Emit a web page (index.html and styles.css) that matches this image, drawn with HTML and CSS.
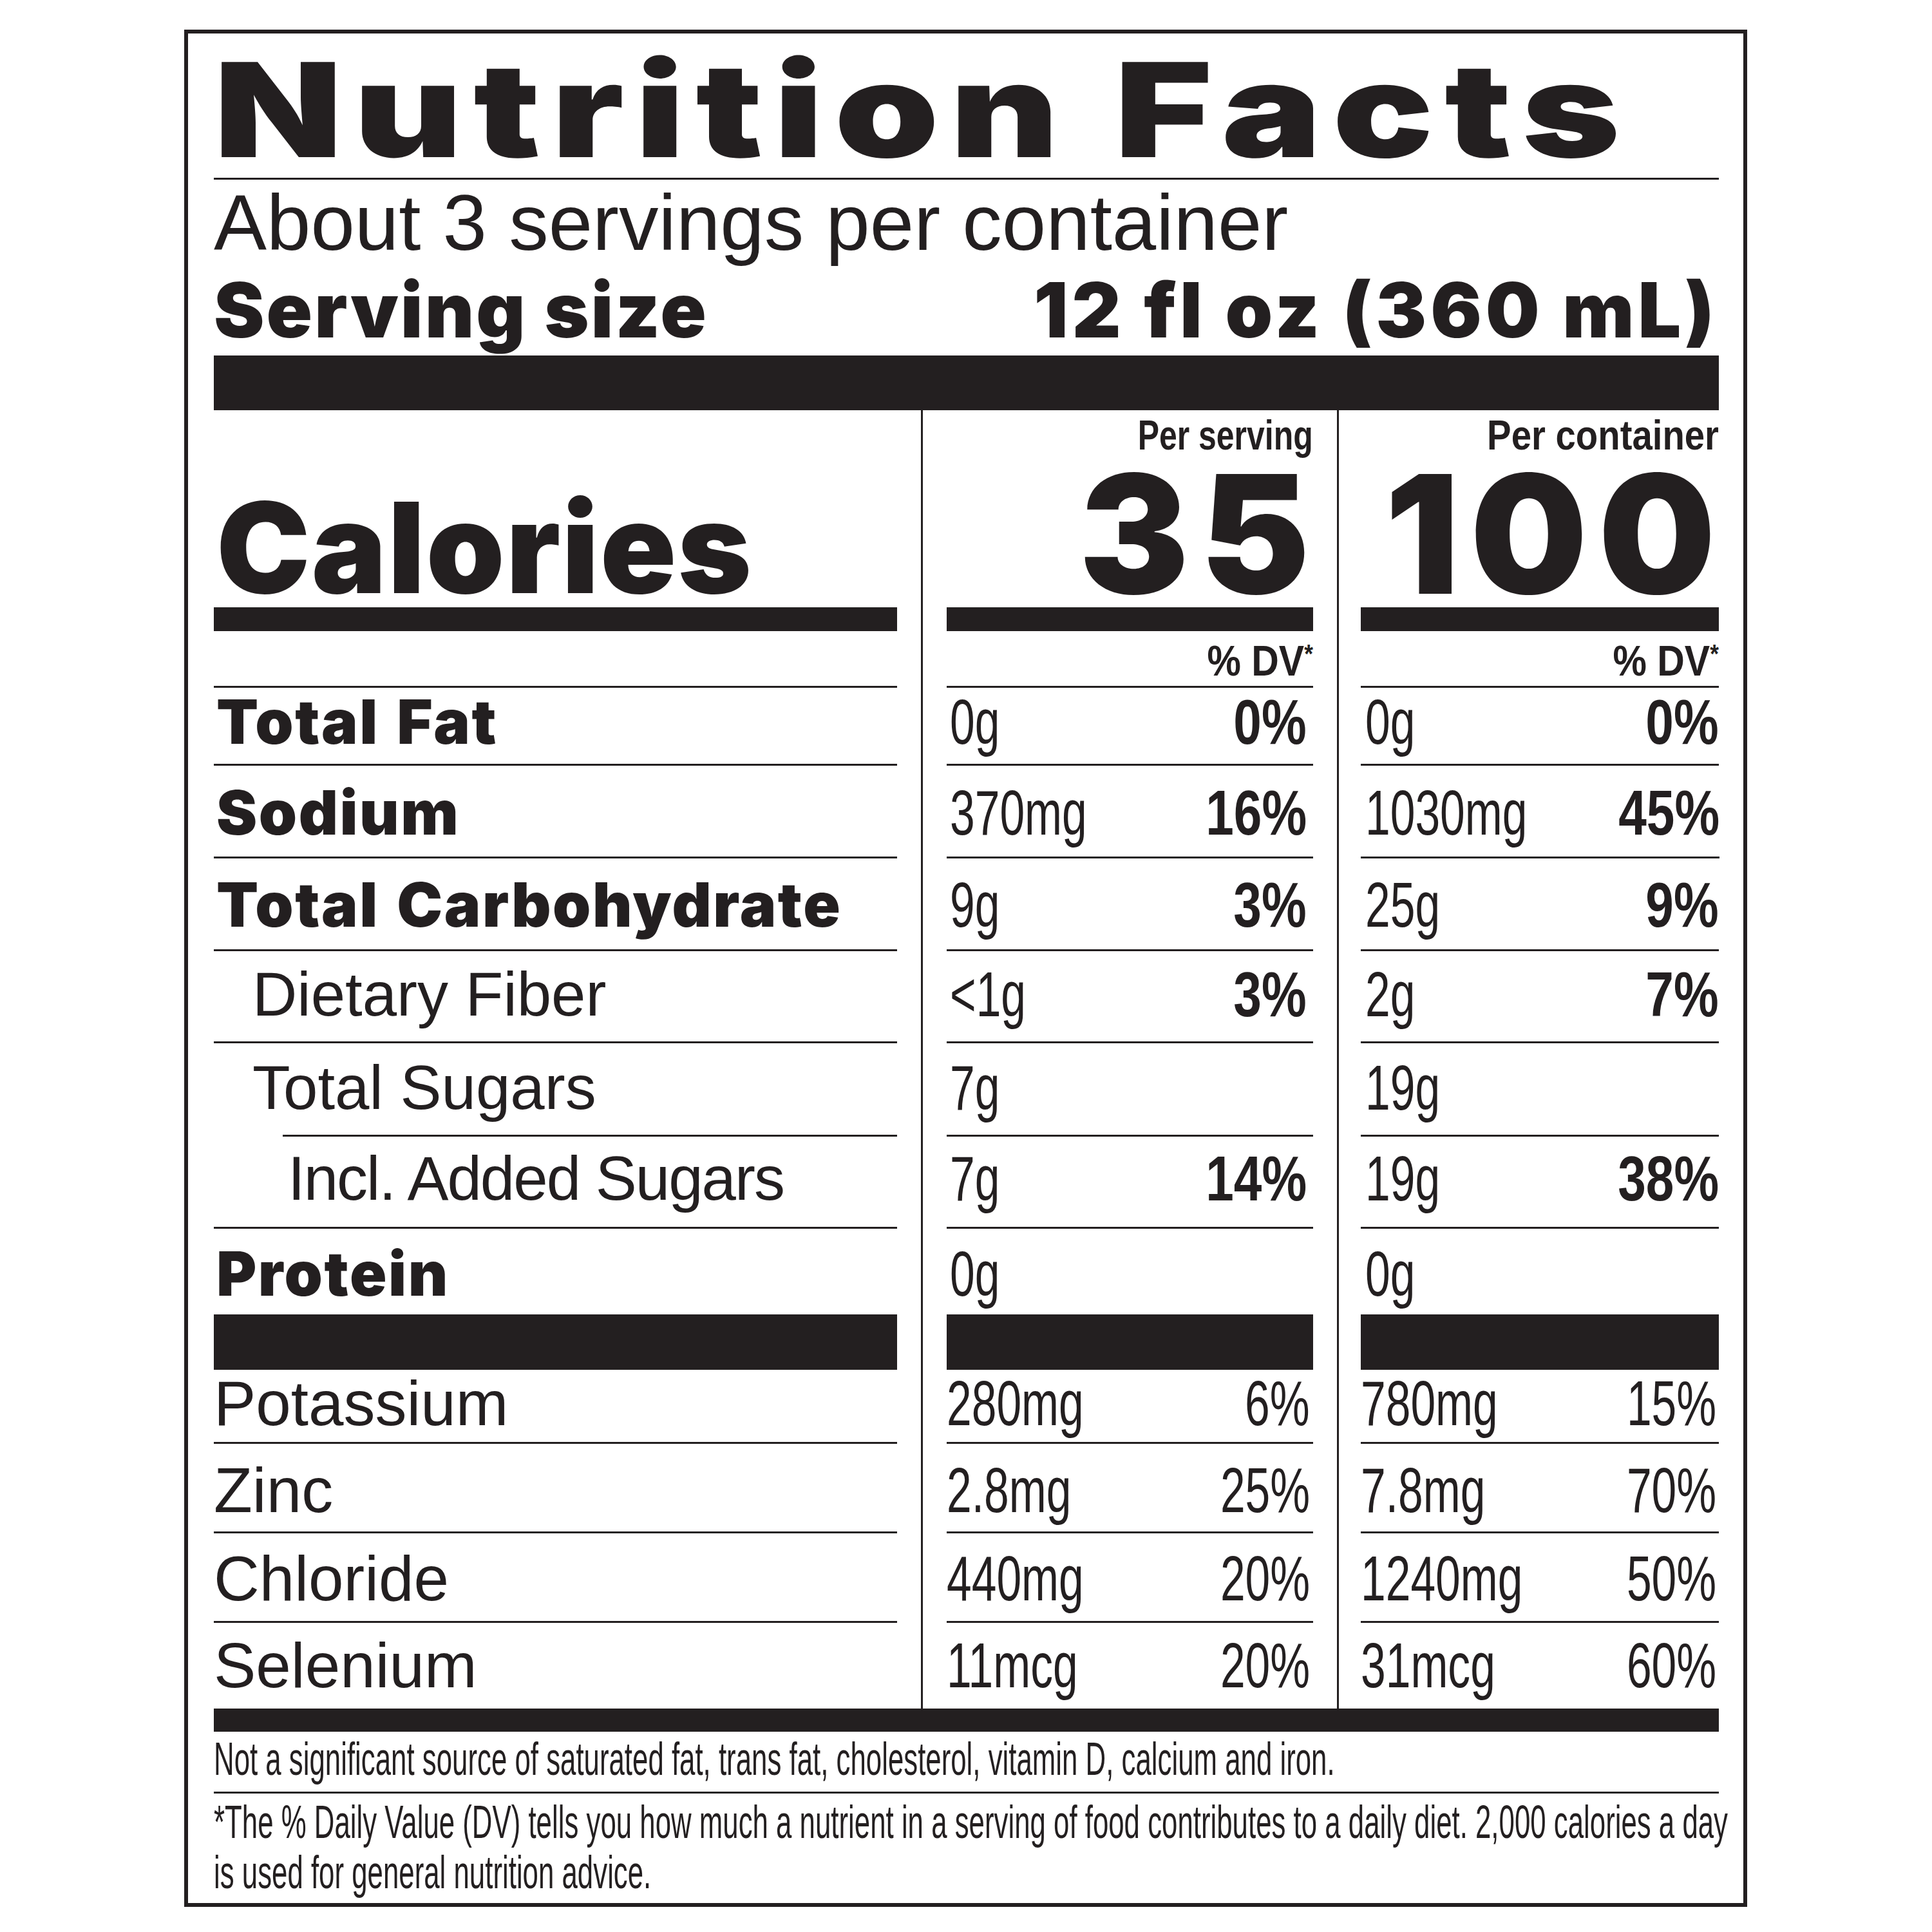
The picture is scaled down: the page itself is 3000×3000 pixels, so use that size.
FILE: index.html
```html
<!DOCTYPE html>
<html lang="en">
<head>
<meta charset="utf-8">
<title>Nutrition Facts</title>
<link rel="stylesheet" href="styles.css">
</head>
<body>
<section class="label">
  <h1 class="title"><span class="title-text">Nutrition Facts</span></h1>
  <p class="servings">About 3 servings per container</p>
  <div class="serving-size"><span class="size-lbl">Serving size</span><span class="amount">12 fl oz (360 mL)</span></div>
  <div class="bar-thick"></div>

  <div class="facts">
    <div class="row r-head">
      <div class="lbl-cell cal">Calories</div>
      <div class="num"><div class="val head"><span class="per">Per serving</span><span class="kcal">35</span></div></div>
      <div class="num c2"><div class="val head"><span class="per wide">Per container</span><span class="kcal">100</span></div></div>
    </div>
    <div class="row r-dv">
      <div class="lbl-cell"></div>
      <div class="num"><div class="val dv"><span class="dvtxt">% DV<span class="ast">*</span></span></div></div>
      <div class="num c2"><div class="val dv"><span class="dvtxt">% DV<span class="ast">*</span></span></div></div>
    </div>
    <div class="row r-fat">
      <div class="lbl-cell b">Total Fat</div>
      <div class="num"><div class="val"><span class="v">0g</span><span class="pb">0%</span></div></div>
      <div class="num c2"><div class="val"><span class="v">0g</span><span class="pb">0%</span></div></div>
    </div>
    <div class="row r-sod">
      <div class="lbl-cell b">Sodium</div>
      <div class="num"><div class="val"><span class="v">370mg</span><span class="pb">16%</span></div></div>
      <div class="num c2"><div class="val"><span class="v">1030mg</span><span class="pb">45%</span></div></div>
    </div>
    <div class="row r-carb">
      <div class="lbl-cell b">Total Carbohydrate</div>
      <div class="num"><div class="val"><span class="v">9g</span><span class="pb">3%</span></div></div>
      <div class="num c2"><div class="val"><span class="v">25g</span><span class="pb">9%</span></div></div>
    </div>
    <div class="row r-fib">
      <div class="lbl-cell ind1">Dietary Fiber</div>
      <div class="num"><div class="val"><span class="v">&lt;1g</span><span class="pb">3%</span></div></div>
      <div class="num c2"><div class="val"><span class="v">2g</span><span class="pb">7%</span></div></div>
    </div>
    <div class="row r-sug">
      <div class="lbl-cell ind1 short-line">Total Sugars</div>
      <div class="num"><div class="val"><span class="v">7g</span></div></div>
      <div class="num c2"><div class="val"><span class="v">19g</span></div></div>
    </div>
    <div class="row r-add">
      <div class="lbl-cell ind2">Incl. Added Sugars</div>
      <div class="num"><div class="val"><span class="v">7g</span><span class="pb">14%</span></div></div>
      <div class="num c2"><div class="val"><span class="v">19g</span><span class="pb">38%</span></div></div>
    </div>
    <div class="row r-pro">
      <div class="lbl-cell b">Protein</div>
      <div class="num"><div class="val"><span class="v">0g</span></div></div>
      <div class="num c2"><div class="val"><span class="v">0g</span></div></div>
    </div>
    <div class="row lo r-pot">
      <div class="lbl-cell">Potassium</div>
      <div class="num"><div class="val"><span class="v">280mg</span><span class="p">6%</span></div></div>
      <div class="num c2"><div class="val"><span class="v">780mg</span><span class="p">15%</span></div></div>
    </div>
    <div class="row lo r-zinc">
      <div class="lbl-cell">Zinc</div>
      <div class="num"><div class="val"><span class="v">2.8mg</span><span class="p">25%</span></div></div>
      <div class="num c2"><div class="val"><span class="v">7.8mg</span><span class="p">70%</span></div></div>
    </div>
    <div class="row lo r-chl">
      <div class="lbl-cell">Chloride</div>
      <div class="num"><div class="val"><span class="v">440mg</span><span class="p">20%</span></div></div>
      <div class="num c2"><div class="val"><span class="v">1240mg</span><span class="p">50%</span></div></div>
    </div>
    <div class="row lo r-sel">
      <div class="lbl-cell">Selenium</div>
      <div class="num"><div class="val"><span class="v">11mcg</span><span class="p">20%</span></div></div>
      <div class="num c2"><div class="val"><span class="v">31mcg</span><span class="p">60%</span></div></div>
    </div>
  </div>

  <div class="bar-med"></div>
  <div class="note-wrap first"><p class="note one">Not a significant source of saturated fat, trans fat, cholesterol, vitamin D, calcium and iron.</p></div>
  <div class="note-wrap"><p class="note two">*The % Daily Value (DV) tells you how much a nutrient in a serving of food contributes to a daily diet. 2,000 calories a day is used for general nutrition advice.</p></div>
</section>
</body>
</html>
```

FILE: styles.css
```css
* {
  box-sizing: border-box;
  margin: 0;
  padding: 0;
}

body {
  background: #ffffff;
  color: #231f20;
  font-family: "Liberation Sans", Arial, sans-serif;
}

.label {
  width: 2427px;
  margin: 46px 0 0 286px;
  border: 6px solid #231f20;
  padding: 14px 38px 9px 40px;
}

.title {
  font-family: Inter, "Liberation Sans", sans-serif;
  font-weight: 900;
  font-size: 203px;
  line-height: 208px;
  white-space: nowrap;
  padding-bottom: 2px;
  border-bottom: 3px solid #231f20;
}

.title-text {
  display: inline-block;
  letter-spacing: 13.5px;
  transform: scaleX(1.28);
  transform-origin: left center;
}

.servings {
  font-size: 123px;
  line-height: 123px;
  margin-top: 5px;
  white-space: nowrap;
}

.serving-size {
  display: flex;
  justify-content: space-between;
  align-items: baseline;
  margin-top: 13px;
  font-family: Inter, "Liberation Sans", sans-serif;
  font-weight: 900;
  font-size: 118px;
  line-height: 123px;
  white-space: nowrap;
}

.serving-size .size-lbl {
  letter-spacing: 3px;
}

.serving-size .amount {
  letter-spacing: 6px;
  padding-right: 1px;
}

.bar-thick {
  height: 85px;
  margin-top: 9px;
  background: #231f20;
}

/* fact rows */
.row {
  display: grid;
  grid-template-columns: 1061px 609px 593px;
  column-gap: 37px;
}

.lbl-cell {
  border-bottom: 3px solid #231f20;
  padding-top: var(--pt, 0);
  font-size: 96px;
  line-height: 100px;
  white-space: nowrap;
}

.lo .lbl-cell {
  font-size: 98px;
}

.lbl-cell.b {
  font-family: Inter, "Liberation Sans", sans-serif;
  font-weight: 900;
  font-size: 95px;
  letter-spacing: 2.5px;
  word-spacing: 6px;
  padding-left: 4px;
}

.lbl-cell.ind1 {
  padding-left: 60px;
}

.lbl-cell.ind2 {
  padding-left: 115px;
  letter-spacing: -2px;
}

.lbl-cell.short-line {
  border-bottom: 0;
  background: linear-gradient(#231f20, #231f20) no-repeat right bottom / calc(100% - 107px) 3px;
}

.num {
  display: flex;
  border-left: 3px solid #231f20;
  padding-left: 37px;
}

.num.c2 {
  padding-left: 34px;
}

.val {
  flex: 1;
  display: flex;
  justify-content: space-between;
  align-items: flex-start;
  border-bottom: 3px solid #231f20;
  padding: var(--pt, 0) 10px 0 5px;
  font-size: 98px;
  line-height: 100px;
  white-space: nowrap;
}

.c2 .val {
  padding-left: 7px;
  padding-right: 0;
}

.lo .val {
  padding-left: 0;
  padding-right: 5px;
}

.lo .c2 .val {
  padding-left: 0;
  padding-right: 4px;
}

.v,
.p {
  display: inline-block;
  font-weight: 400;
  transform: scaleX(0.71);
}

.v {
  transform-origin: left center;
}

.p {
  transform-origin: right center;
}

.pb {
  display: inline-block;
  font-weight: 700;
  transform: scaleX(0.8);
  transform-origin: right center;
}

/* header rows */
.r-head {
  height: 343px;
}

.lbl-cell.cal {
  display: flex;
  flex-direction: column;
  justify-content: flex-end;
  border-bottom: 37px solid #231f20;
  font-family: Inter, "Liberation Sans", sans-serif;
  font-weight: 900;
  font-size: 195px;
  line-height: 185px;
  letter-spacing: 2px;
  padding-left: 4px;
}

.val.head {
  flex-direction: column;
  align-items: flex-end;
  justify-content: flex-start;
  padding: 7px 0 0 0;
  border-bottom: 37px solid #231f20;
}

.per {
  display: block;
  font-weight: 700;
  font-size: 64px;
  line-height: 64px;
  transform: scaleX(0.78);
  transform-origin: right center;
}

.per.wide {
  transform: scaleX(0.88);
}

.kcal {
  display: block;
  margin-top: 7px;
  margin-right: -12px;
  font-family: Inter, "Liberation Sans", sans-serif;
  font-weight: 900;
  font-size: 256px;
  line-height: 228px;
  letter-spacing: 17px;
}

.r-dv {
  height: 88px;
}

.val.dv {
  justify-content: flex-end;
  padding: 12px 0 0 0;
}

.dvtxt {
  display: inline-block;
  font-weight: 700;
  font-size: 67px;
  line-height: 67px;
  transform: scaleX(0.88);
  transform-origin: right center;
}

.dvtxt .ast {
  font-size: 40px;
  line-height: 0;
  vertical-align: 20px;
}

.r-fat { height: 121px; --pt: 3px; }
.r-sod { height: 144px; --pt: 23px; }
.r-carb { height: 144px; --pt: 22px; }
.r-fib { height: 143px; --pt: 17px; }
.r-sug { height: 145px; --pt: 19px; }
.r-add { height: 143px; --pt: 15px; }
.r-pro { height: 219px; --pt: 20px; }
.r-pot { height: 115px; --pt: 2px; }
.r-zinc { height: 139px; --pt: 22px; }
.r-chl { height: 139px; --pt: 20px; }
.r-sel { height: 133px; --pt: 16px; }

.r-pro .lbl-cell,
.r-pro .val {
  border-bottom-width: 86px;
}

.r-sel .lbl-cell,
.r-sel .val {
  border-bottom: 0;
}

.bar-med {
  height: 36px;
  background: #231f20;
}

/* footnotes */
.note-wrap.first {
  margin-top: 5px;
  padding-bottom: 15px;
  border-bottom: 3px solid #231f20;
}

.note-wrap + .note-wrap {
  margin-top: 5px;
}

.note {
  font-size: 73px;
  transform: scaleX(0.6);
  transform-origin: left top;
}

.note.one {
  line-height: 73px;
  white-space: nowrap;
}

.note.two {
  width: 3950px;
  line-height: 78px;
}
```
